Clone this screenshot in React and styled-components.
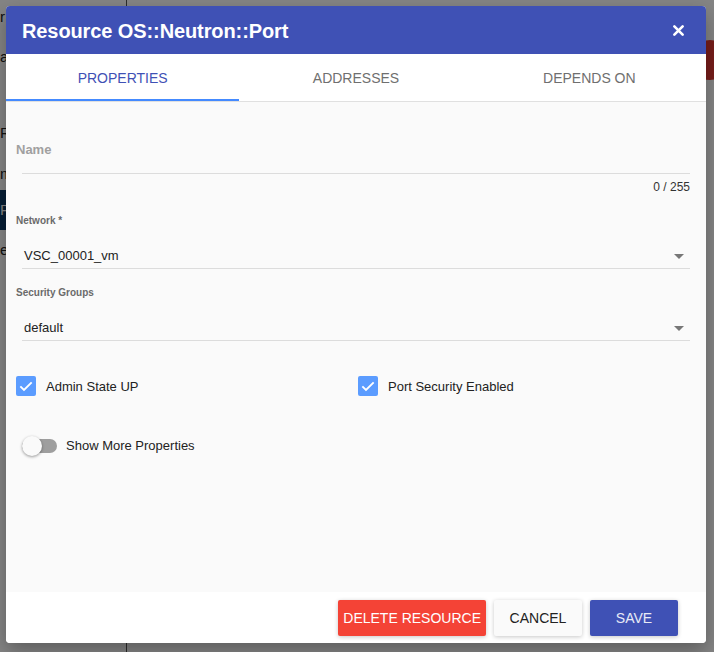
import styled, { createGlobalStyle } from "styled-components";

const GlobalStyle = createGlobalStyle`
  *, *::before, *::after {
    box-sizing: border-box;
  }
  html, body {
    margin: 0;
    padding: 0;
    height: 100%;
  }
  body {
    font-family: "Liberation Sans", Arial, sans-serif;
    background: #f0f0f0;
    overflow: hidden;
  }
`;

const Page = styled.div`
  position: relative;
  width: 714px;
  height: 652px;
  display: flex;
  background: #ffffff;
`;

const Side = styled.div`
  width: 127px;
  border-right: 1px solid #555;
  display: flex;
  flex-direction: column;
  font-size: 15px;
  line-height: 18px;
  color: #222;
`;

const SideText = styled.span`
  margin-top: ${(p) => p.top}px;
`;

const SideButton = styled.div`
  margin-top: ${(p) => p.top}px;
  background: #0d3a66;
  color: #fff;
  height: 40px;
  line-height: 40px;
`;

const Fab = styled.div`
  position: absolute;
  right: -16px;
  top: 40px;
  width: 40px;
  height: 40px;
  border-radius: 50%;
  background: #e53935;
`;

const Backdrop = styled.div`
  position: absolute;
  inset: 0;
  background: rgba(0, 0, 0, 0.48);
  display: flex;
  padding: 6px 0 0 6px;
`;

const Dialog = styled.div`
  width: 700px;
  height: 637px;
  border-radius: 4px;
  overflow: hidden;
  display: flex;
  flex-direction: column;
  background: #fafafa;
  box-shadow: 0 8px 20px rgba(0, 0, 0, 0.3);
`;

const Header = styled.div`
  height: 48px;
  flex-shrink: 0;
  background: #3f51b5;
  display: flex;
  align-items: center;
  justify-content: space-between;
  padding: 0 22px 0 16px;
  color: #fff;
`;

const Title = styled.h2`
  margin: 0;
  font-size: 20px;
  font-weight: bold;
  letter-spacing: -0.1px;
  padding-top: 2px;
`;

const Tabs = styled.div`
  height: 48px;
  flex-shrink: 0;
  display: flex;
  background: #fff;
  border-bottom: 1px solid #e0e0e0;
`;

const Tab = styled.div`
  flex: 1;
  display: flex;
  align-items: center;
  justify-content: center;
  padding-top: 2px;
  font-size: 14px;
  text-transform: uppercase;
  color: ${(p) => (p.active ? "#3f51b5" : "#6f6f6f")};
  border-bottom: 2px solid ${(p) => (p.active ? "#448aff" : "transparent")};
`;

const Body = styled.div`
  flex: 1;
  padding: 40px 16px 0 10px;
`;

const Field = styled.div`
  margin-top: ${(p) => p.top || 0}px;
`;

const BigLabel = styled.div`
  font-size: 13px;
  font-weight: bold;
  color: #a0a0a0;
`;

const SmallLabel = styled.div`
  font-size: 10px;
  font-weight: bold;
  color: #6a6a6a;
  margin-bottom: 13px;
`;

const Line = styled.div`
  margin-left: 6px;
  height: ${(p) => p.h || 30}px;
  border-bottom: 1px solid #dcdcdc;
  display: flex;
  align-items: flex-end;
  justify-content: space-between;
  padding: 0 6px 5px 2px;
  font-size: 13px;
  color: #222;
`;

const Arrow = styled.span`
  width: 0;
  height: 0;
  border-left: 5px solid transparent;
  border-right: 5px solid transparent;
  border-top: 5px solid #777;
  margin-bottom: 4px;
`;

const Counter = styled.div`
  text-align: right;
  font-size: 12px;
  color: #333;
  padding-top: 6px;
`;

const CheckRow = styled.div`
  display: grid;
  grid-template-columns: 342px 1fr;
  margin-top: 35px;
`;

const Check = styled.label`
  display: flex;
  align-items: center;
  gap: 10px;
  font-size: 13px;
  color: #222;
`;

const Box = styled.span`
  width: 20px;
  height: 20px;
  border-radius: 2px;
  background: #5b9cff;
  display: flex;
  align-items: center;
  justify-content: center;
`;

const Toggle = styled.div`
  display: flex;
  align-items: center;
  gap: 9px;
  margin: 42px 0 0 6px;
  font-size: 13px;
  color: #222;
`;

const Track = styled.span`
  position: relative;
  width: 35px;
  height: 14px;
  border-radius: 7px;
  background: #9e9e9e;
`;

const Thumb = styled.span`
  position: absolute;
  left: 0;
  top: -3px;
  width: 20px;
  height: 20px;
  border-radius: 50%;
  background: #fafafa;
  box-shadow: 0 1px 3px rgba(0, 0, 0, 0.4);
`;

const Footer = styled.div`
  height: 51px;
  flex-shrink: 0;
  background: #fff;
  display: flex;
  justify-content: flex-end;
  align-items: flex-start;
  gap: 8px;
  padding: 8px 28px 0 0;
`;

const Button = styled.button`
  height: 36px;
  min-width: 88px;
  padding: 0 5px;
  border: none;
  border-radius: 2px;
  font-family: inherit;
  font-size: 14px;
  text-transform: uppercase;
  background: ${(p) => p.bg};
  color: ${(p) => p.fg};
  box-shadow: 0 1px 4px rgba(0, 0, 0, 0.22);
`;

const CheckIcon = () => (
  <svg width="16" height="16" viewBox="0 0 24 24">
    <path d="M3.5 12.5l5.5 5.5L20.5 6.5" fill="none" stroke="#fff" strokeWidth="2.8" />
  </svg>
);

const CloseIcon = () => (
  <svg width="11" height="11" viewBox="0 0 12 12">
    <path d="M1.5 1.5l9 9M10.5 1.5l-9 9" stroke="#fff" strokeWidth="2.8" strokeLinecap="round" />
  </svg>
);

export default function App() {
  return (
    <>
      <GlobalStyle />
      <Page>
        <Side>
          <SideText top={8}>r</SideText>
          <SideText top={22}>a</SideText>
          <SideText top={58}>R</SideText>
          <SideText top={23}>m</SideText>
          <SideButton top={7}>P</SideButton>
          <SideText top={11}>e</SideText>
        </Side>
        <Fab />
        <Backdrop>
          <Dialog>
            <Header>
              <Title>Resource OS::Neutron::Port</Title>
              <CloseIcon />
            </Header>
            <Tabs>
              <Tab active>Properties</Tab>
              <Tab>Addresses</Tab>
              <Tab>Depends On</Tab>
            </Tabs>
            <Body>
              <Field>
                <BigLabel>Name</BigLabel>
                <Line h={17} />
                <Counter>0 / 255</Counter>
              </Field>
              <Field top={21}>
                <SmallLabel>Network *</SmallLabel>
                <Line>
                  VSC_00001_vm
                  <Arrow />
                </Line>
              </Field>
              <Field top={18}>
                <SmallLabel>Security Groups</SmallLabel>
                <Line>
                  default
                  <Arrow />
                </Line>
              </Field>
              <CheckRow>
                <Check>
                  <Box>
                    <CheckIcon />
                  </Box>
                  Admin State UP
                </Check>
                <Check>
                  <Box>
                    <CheckIcon />
                  </Box>
                  Port Security Enabled
                </Check>
              </CheckRow>
              <Toggle>
                <Track>
                  <Thumb />
                </Track>
                Show More Properties
              </Toggle>
            </Body>
            <Footer>
              <Button bg="#f44336" fg="#fff">Delete Resource</Button>
              <Button bg="#fafafa" fg="#222">Cancel</Button>
              <Button bg="#3f51b5" fg="#e8eaf6">Save</Button>
            </Footer>
          </Dialog>
        </Backdrop>
      </Page>
    </>
  );
}
